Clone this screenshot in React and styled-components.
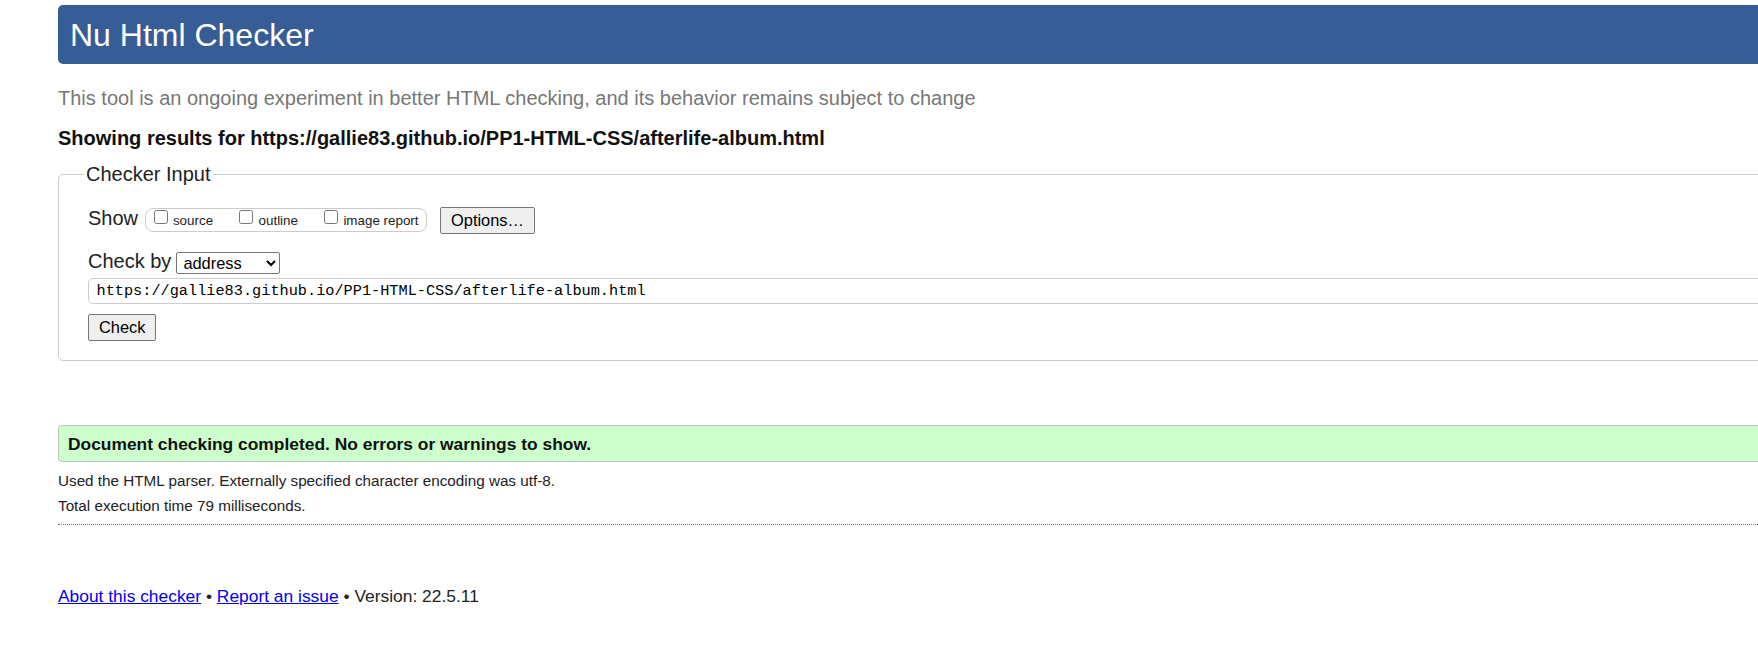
import styled, { createGlobalStyle } from 'styled-components'

const GlobalStyle = createGlobalStyle`
  html, body {
    margin: 0;
    padding: 0;
    background: #fff;
    overflow: hidden;
  }
  body {
    font-family: 'Liberation Sans', Arial, Helvetica, sans-serif;
    color: #222;
  }
`

const Page = styled.div`
  width: 1800px;
  padding: 5px 0 0 58px;
`

const Header = styled.h1`
  margin: 0;
  padding: 12px 12px 10px;
  background: #365d95;
  color: #fff;
  font-size: 32px;
  font-weight: normal;
  line-height: 37px;
  border-radius: 5px;
`

const Intro = styled.p`
  margin: 22.5px 0 0;
  font-size: 20px;
  line-height: 23px;
  color: #777;
`

const ResultsFor = styled.p`
  margin: 17.3px 0 0;
  font-size: 20px;
  font-weight: bold;
  line-height: 23px;
  color: #111;
`

const Fieldset = styled.fieldset`
  margin: 13px 0 0;
  padding: 21px 29px 19px;
  min-width: 0;
  border: 1px solid #ccc;
  border-radius: 5px;
`

const Legend = styled.legend`
  margin-left: -4px;
  padding: 0 2px;
  font-size: 20px;
  line-height: 23px;
  color: #222;
`

const Row = styled.div`
  display: flex;
  align-items: flex-start;
  margin-top: ${({ $gap }) => $gap || 0}px;
`

const RowLabel = styled.span`
  font-size: 20px;
  line-height: 23px;
  color: #222;
`

const ShowGroup = styled.span`
  display: inline-flex;
  align-items: flex-start;
  gap: 26px;
  box-sizing: border-box;
  height: 24px;
  margin: 1.6px 0 0 7px;
  padding: 0 7.5px;
  border: 1px solid #ccc;
  border-radius: 8px;
`

const CheckItem = styled.label`
  display: inline-flex;
  align-items: flex-start;
  gap: 5.4px;
`

const CheckBox = styled.input`
  width: 14px;
  height: 14px;
  margin: 1px 0 0;
`

const CheckText = styled.span`
  padding-top: 4px;
  font-size: 13.4px;
  line-height: 15px;
  color: #222;
`

const Button = styled.button`
  box-sizing: border-box;
  height: 27px;
  margin-left: ${({ $offset }) => $offset || 0}px;
  padding: 0 10px;
  font-family: 'Liberation Sans', Arial, sans-serif;
  font-size: 16.4px;
  color: #000;
  background: #efefef;
  border: 1px solid #767676;
  border-radius: 2px;
`

const CheckButton = styled(Button)`
  display: block;
  margin-top: 10.7px;
`

const Select = styled.select`
  box-sizing: border-box;
  width: 104px;
  height: 22px;
  margin: 1.8px 0 0 5px;
  padding: 0 2px;
  font-family: 'Liberation Sans', Arial, sans-serif;
  font-size: 16.4px;
  color: #000;
  background: #fff;
  border: 1px solid #767676;
  border-radius: 2px;
`

const UrlInput = styled.input`
  display: block;
  box-sizing: border-box;
  width: 100%;
  height: 26px;
  margin-top: 3.6px;
  padding: 0 7.5px;
  font-family: 'Liberation Mono', 'DejaVu Sans Mono', monospace;
  font-size: 15.25px;
  color: #000;
  border: 1px solid #ccc;
  border-radius: 5px;
`

const Success = styled.p`
  margin: 63.8px 0 0;
  padding: 7.5px 9px 7px;
  font-size: 17.4px;
  font-weight: bold;
  line-height: 20px;
  color: #111;
  background: #ccffcc;
  border: 1px solid #c2c2c2;
  border-radius: 4px;
`

const Detail = styled.p`
  margin: ${({ $gap }) => $gap}px 0 0;
  font-size: 15.25px;
  line-height: 17.5px;
  color: #222;
`

const Rule = styled.hr`
  margin: 9px 0 0;
  border: 0;
  border-top: 1px dotted #777;
`

const Footer = styled.p`
  margin: 61px 0 0;
  font-size: 17.4px;
  line-height: 20px;
  color: #222;

  a {
    color: #0000ee;
  }
`

const App = () => {
    return (
        <>
            <GlobalStyle />
            <Page>
                <Header>Nu Html Checker</Header>
                <Intro>This tool is an ongoing experiment in better HTML checking, and its behavior remains subject to change</Intro>
                <ResultsFor>Showing results for https://gallie83.github.io/PP1-HTML-CSS/afterlife-album.html</ResultsFor>
                <Fieldset>
                    <Legend>Checker Input</Legend>
                    <Row>
                        <RowLabel>Show</RowLabel>
                        <ShowGroup>
                            <CheckItem>
                                <CheckBox type="checkbox" />
                                <CheckText>source</CheckText>
                            </CheckItem>
                            <CheckItem>
                                <CheckBox type="checkbox" />
                                <CheckText>outline</CheckText>
                            </CheckItem>
                            <CheckItem>
                                <CheckBox type="checkbox" />
                                <CheckText>image report</CheckText>
                            </CheckItem>
                        </ShowGroup>
                        <Button type="button" $offset={13}>Options…</Button>
                    </Row>
                    <Row $gap={16.6}>
                        <RowLabel>Check by</RowLabel>
                        <Select defaultValue="address">
                            <option value="address">address</option>
                            <option value="file">file upload</option>
                            <option value="text">text input</option>
                        </Select>
                    </Row>
                    <UrlInput type="url" readOnly value="https://gallie83.github.io/PP1-HTML-CSS/afterlife-album.html" />
                    <CheckButton type="button">Check</CheckButton>
                </Fieldset>
                <Success>Document checking completed. No errors or warnings to show.</Success>
                <Detail $gap={10.5}>Used the HTML parser. Externally specified character encoding was utf-8.</Detail>
                <Detail $gap={7.5}>Total execution time 79 milliseconds.</Detail>
                <Rule />
                <Footer>
                    <a href="#">About this checker</a> • <a href="#">Report an issue</a> • Version: 22.5.11
                </Footer>
            </Page>
        </>
    )
}

export default App
